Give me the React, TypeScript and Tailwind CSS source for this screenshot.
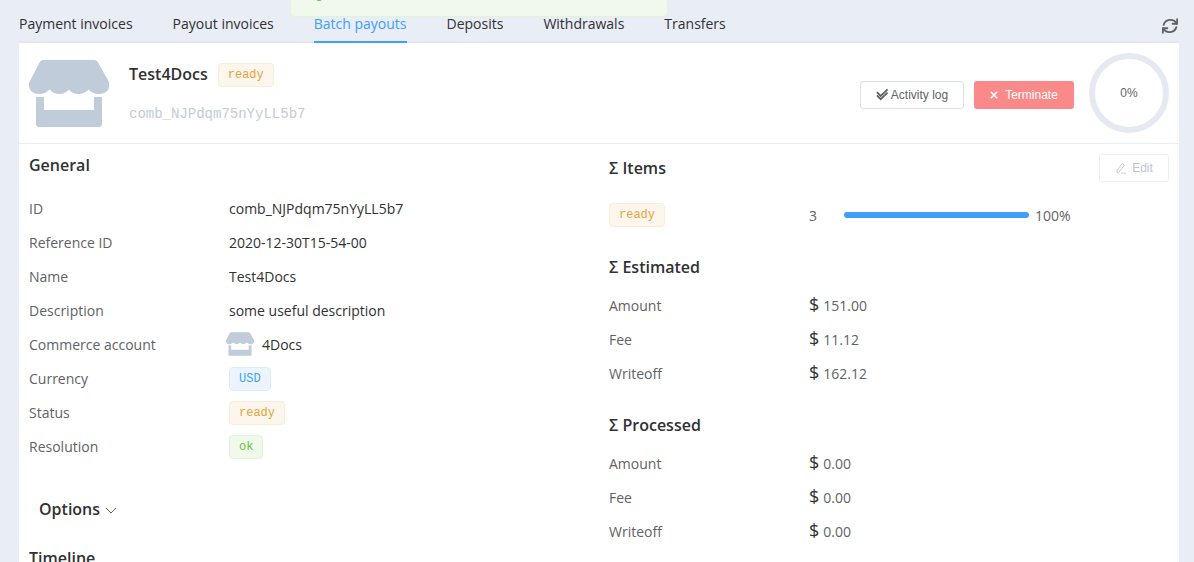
import React from "react";

const Shop = ({ className }: { className?: string }) => (
  <svg viewBox="0 0 80 67" className={className} fill="#c0ccda">
    <path d="M14 0H65C67 0 68 1 69 2.500L79 20C80.500 23 81 25 80 27.500C79 32 74 34 70 34C65 34 61.500 32 59.500 29.500C57.500 32 53 34 49.500 34C45 34 41.500 32 40 29.500C38 32 34.500 34 30.500 34C26.500 34 22.500 32 20.500 29.500C18.500 32 14.500 34 10 34C5 34 0.500 31 0 26C-0.500 24 0.500 21.500 1.500 20L10.500 2.500C11.500 1 12.500 0 14 0Z" />
    <path d="M7 37H15V50H65V37H73V64C73 66 72 67 70 67H10C8 67 7 66 7 64Z" />
  </svg>
);

const Tag = ({ children, tone }: { children: React.ReactNode; tone: "warn" | "info" | "ok" }) => {
  const tones = {
    warn: "bg-[#fdf6ec] border-[#faecd8] text-[#e6a23c]",
    info: "bg-[#ecf5ff] border-[#d9ecff] text-[#409eff]",
    ok: "bg-[#f0f9eb] border-[#e1f3d8] text-[#67c23a]",
  };
  return (
    <span className={`inline-flex h-6 items-center rounded-[4px] border px-[9px] font-['Liberation_Mono',monospace] text-[12px] ${tones[tone]}`}>
      {children}
    </span>
  );
};

const Row = ({ label, children }: { label: string; children: React.ReactNode }) => (
  <div className="flex h-[34px] items-center">
    <div className="w-[200px] text-[#606266]">{label}</div>
    <div className="text-[#303133]">{children}</div>
  </div>
);

const Money = ({ value }: { value: string }) => (
  <span className="flex items-center text-[#606266]">
    <span className="mr-[4px] mt-[-3px] text-[18px] leading-none text-[#303133]">$</span>
    <span>{value}</span>
  </span>
);

const Heading = ({ children, className }: { children: React.ReactNode; className?: string }) => (
  <h3 className={`text-[16px] font-semibold leading-[22px] text-[#303133] ${className ?? ""}`}>{children}</h3>
);

const tabs = ["Payment invoices", "Payout invoices", "Batch payouts", "Deposits", "Withdrawals", "Transfers"];

export default function App() {
  return (
    <div className="relative flex h-[562px] flex-col overflow-hidden bg-[#e9edf5] pl-[19px] pr-[15px] font-['Open_Sans',sans-serif] text-[14px]">
      <div className="absolute left-[290px] top-[-40px] h-[57px] w-[378px] rounded-[4px] border border-[#e1f3d8] bg-[#f0f9eb]">
        <span className="absolute bottom-[15px] left-[25px] h-[3px] w-[6px] rounded-b-full bg-[#67c23a]" />
      </div>

      <div className="flex h-[43px] shrink-0 items-end justify-between border-b-2 border-[#e4e7ed]">
        <div className="flex gap-[40px]">
          {tabs.map((t) => (
            <div
              key={t}
              className={`mb-[-2px] h-[43px] pt-[13px] leading-[22px] ${
                t === "Batch payouts" ? "border-b-2 border-[#409eff] text-[#409eff]" : "text-[#303133]"
              }`}
            >
              {t}
            </div>
          ))}
        </div>
        <svg viewBox="0 0 24 24" className="mb-[6px] h-[18px] w-[18px]" fill="none" stroke="#606266" strokeWidth="2.400" strokeLinecap="round" strokeLinejoin="round">
          <path d="M21.500 3v6h-6" />
          <path d="M21 9a9.500 9.500 0 0 0-17.500 1.500" />
          <path d="M2.500 21v-6h6" />
          <path d="M3 15a9.500 9.500 0 0 0 17.500-1.500" />
        </svg>
      </div>

      <div className="flex-1 bg-white">
        <div className="flex h-[101px] items-center border-b border-[#ebeef5] px-[10px]">
          <Shop className="mb-[-1px] h-[67px] w-[80px] self-start mt-[17px]" />
          <div className="ml-[20px] flex-1">
            <div className="flex h-[24px] items-center">
              <span className="text-[16px] font-semibold text-[#303133]">Test4Docs</span>
              <span className="ml-[10px]"><Tag tone="warn">ready</Tag></span>
            </div>
            <div className="mt-[18px] font-['Liberation_Mono',monospace] text-[14px] leading-[20px] text-[#c0ccda]">
              comb_NJPdqm75nYyLL5b7
            </div>
          </div>
          <button className="mt-[3px] flex h-[28px] w-[104px] items-center justify-center rounded-[3px] border border-[#dcdfe6] bg-white font-['Liberation_Sans',sans-serif] text-[12px] text-[#606266]">
            <svg viewBox="0 0 14 14" className="mr-[2px] h-[13px] w-[13px]" fill="none" stroke="#606266" strokeWidth="2">
              <path d="M1 4.500L5 8.500L12.500 1.500" />
              <path d="M1 8L5 12L12.500 5" />
            </svg>
            Activity log
          </button>
          <button className="ml-[10px] mt-[3px] flex h-[28px] w-[100px] items-center justify-center rounded-[3px] bg-[#fa8989] font-['Liberation_Sans',sans-serif] text-[12px] text-white">
            <svg viewBox="0 0 10 10" className="mr-[7px] h-[8px] w-[8px]" stroke="white" strokeWidth="2">
              <path d="M1 1L9 9M9 1L1 9" />
            </svg>
            Terminate
          </button>
          <div className="mb-[1px] ml-[15px] flex h-[80px] w-[80px] items-center justify-center rounded-full border-[6px] border-[#e5e9f2] font-['Liberation_Sans',sans-serif] text-[12px] text-[#606266]">
            <span>0%</span>
          </div>
        </div>

        <div className="flex">
          <div className="w-[580px] pl-[10px]">
            <Heading className="mt-[10px]">General</Heading>
            <div className="mt-[15px]">
              <Row label="ID">comb_NJPdqm75nYyLL5b7</Row>
              <Row label="Reference ID">2020-12-30T15-54-00</Row>
              <Row label="Name">Test4Docs</Row>
              <Row label="Description">some useful description</Row>
              <Row label="Commerce account">
                <span className="ml-[-3px] flex items-center">
                  <Shop className="h-[24px] w-[28px]" />
                  <span className="ml-[8px]">4Docs</span>
                </span>
              </Row>
              <Row label="Currency"><Tag tone="info">USD</Tag></Row>
              <Row label="Status"><Tag tone="warn">ready</Tag></Row>
              <Row label="Resolution"><Tag tone="ok">ok</Tag></Row>
            </div>
            <div className="ml-[10px] mt-[35px] flex items-center">
              <Heading>Options</Heading>
              <svg viewBox="0 0 12 12" className="ml-[5px] mt-[2px] h-[12px] w-[12px]" fill="none" stroke="#606266" strokeWidth="1">
                <path d="M1 4L6 9L11 4" />
              </svg>
            </div>
            <Heading className="mt-[27px]">Timeline</Heading>
          </div>

          <div className="relative w-[570px] px-[10px]">
            <button className="absolute right-[0px] top-[10px] flex h-[28px] w-[70px] items-center justify-center rounded-[3px] border border-[#ebeef5] bg-white font-['Liberation_Sans',sans-serif] text-[12px] text-[#c0c4cc]">
              <svg viewBox="0 0 14 14" className="mr-[5px] h-[12px] w-[12px]" fill="none" stroke="#c0c4cc" strokeWidth="1">
                <path d="M2.500 9.500L8.500 1.500L11 3.500L5 11.500L2.500 12.500Z" />
                <path d="M7 13H13" />
              </svg>
              Edit
            </button>
            <Heading className="mt-[13px]">Σ Items</Heading>
            <div className="mt-[18px] flex h-[34px] items-center text-[#606266]">
              <div className="w-[200px]"><Tag tone="warn">ready</Tag></div>
              <span className="w-[35px] pt-[2px]">3</span>
              <div className="mt-[1px] h-[6px] w-[185px] rounded-full bg-[#409eff]" />
              <span className="ml-[6px] pt-[2px]">100%</span>
            </div>
            <Heading className="mt-[25px]">Σ Estimated</Heading>
            <div className="mt-[10px]">
              <Row label="Amount"><Money value="151.00" /></Row>
              <Row label="Fee"><Money value="11.12" /></Row>
              <Row label="Writeoff"><Money value="162.12" /></Row>
            </div>
            <Heading className="mt-[24px]">Σ Processed</Heading>
            <div className="mt-[10px]">
              <Row label="Amount"><Money value="0.00" /></Row>
              <Row label="Fee"><Money value="0.00" /></Row>
              <Row label="Writeoff"><Money value="0.00" /></Row>
            </div>
          </div>
        </div>
      </div>
    </div>
  );
}
